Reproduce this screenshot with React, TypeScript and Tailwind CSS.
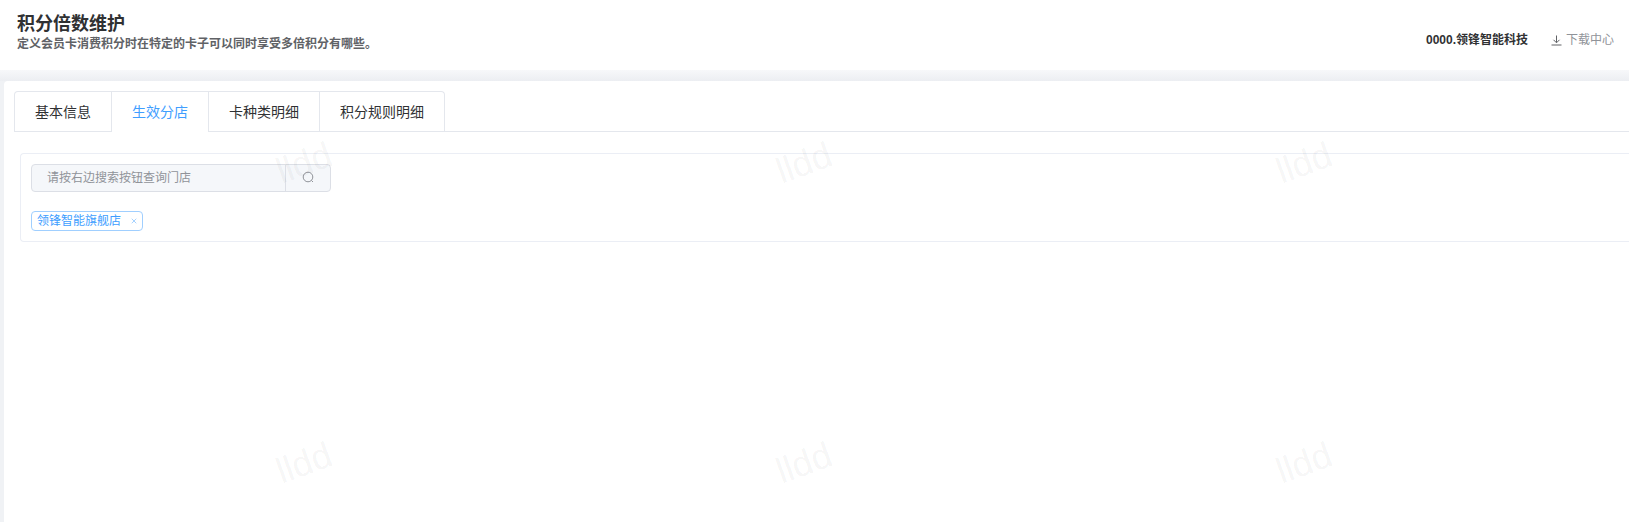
import React from "react";
import { X } from "lucide-react";

const font = { fontFamily: '"Liberation Sans", "Noto Sans CJK SC", sans-serif' };
const marks = [
  "left-[276px] top-[143px]", "left-[776px] top-[143px]", "left-[1276px] top-[143px]",
  "left-[276px] top-[443px]", "left-[776px] top-[443px]", "left-[1276px] top-[443px]",
];

export default function App() {
  return (
    <div className="relative h-[522px] w-[1629px] overflow-hidden bg-white font-['Liberation_Sans','Noto_Sans_CJK_SC',sans-serif]">
      <header className="flex h-[70px] items-start justify-between bg-white pl-[17px] pr-[15px]">
        <div className="pt-[14px]">
          <h1 className="text-[18px] font-bold leading-[20px] text-[#303133]">积分倍数维护</h1>
          <p className="mt-[3px] text-[12px] font-bold leading-[14px] text-[#606266]">定义会员卡消费积分时在特定的卡子可以同时享受多倍积分有哪些。</p>
        </div>
        <div className="flex items-center pt-[32px]">
          <span className="text-[12px] font-bold leading-[16px] text-[#303133]">0000.领锋智能科技</span>
          <span className="ml-[23px] flex items-center text-[12px] leading-[16px] text-[#909399]">
            <svg className="mr-[4px] h-[11px] w-[11px]" viewBox="0 0 11 11" fill="none" stroke="#606266" strokeWidth="1">
              <path d="M5.5 0.5V7.5M2.5 4.8L5.5 7.8L8.5 4.8M0.5 10H10.5" />
            </svg>
            下载中心
          </span>
        </div>
      </header>
      <main className="h-[452px] bg-[#f0f2f5]">
        <div className="h-[11px] bg-gradient-to-b from-[#f7f8fa] to-[#eceef2]" />
        <div className="h-[441px] pl-[4px]">
          <section className="h-full rounded-tl-[4px] bg-white pl-[10px] pt-[10px]">
            <nav className="flex h-[41px] border-b border-[#e4e7ed]">
              <div className="flex h-[41px] rounded-t-[4px] border border-b-0 border-[#e4e7ed] text-[14px] leading-[40px] text-[#303133]">
                <div className="w-[96px] border-b border-[#e4e7ed] text-center">基本信息</div>
                <div className="w-[98px] border-x border-[#e4e7ed] bg-white text-center text-[#409eff]">生效分店</div>
                <div className="w-[111px] border-b border-r border-[#e4e7ed] text-center">卡种类明细</div>
                <div className="w-[124px] border-b border-[#e4e7ed] text-center">积分规则明细</div>
              </div>
            </nav>
            <div className="ml-[6px] mt-[21px] h-[89px] rounded-l-[4px] border border-r-0 border-[#ebeef5] pl-[10px] pt-[10px]">
              <div className="flex h-[28px] w-[300px] rounded-[4px] border border-[#dcdfe6] bg-[#f5f7fa]">
                <div className="flex-1 pl-[15px] text-[12px] leading-[26px] text-[#909399]">请按右边搜索按钮查询门店</div>
                <div className="flex w-[45px] items-center justify-center border-l border-[#dcdfe6] pb-[2px]">
                  <svg className="h-[12px] w-[12px]" viewBox="0 0 12 12" fill="none" stroke="#909399" strokeWidth="1">
                    <circle cx="6" cy="6" r="4.8" />
                    <path d="M9.4 9.4L11 11" />
                  </svg>
                </div>
              </div>
              <div className="mt-[19px] flex h-[20px] w-[112px] items-center rounded-[4px] border border-[#a0cfff] bg-white pl-[5px] text-[12px] text-[#409eff]">
                领锋智能旗舰店
                <X className="ml-[9px] h-[8px] w-[8px] text-[#79bbff]" strokeWidth={2} />
              </div>
            </div>
          </section>
        </div>
      </main>
      {marks.map((m) => (
        <div key={m} className={`pointer-events-none absolute ${m} rotate-[-20deg] text-[36px] leading-[40px] text-[#000000]/[0.05]`} style={font}>
          lldd
        </div>
      ))}
    </div>
  );
}
